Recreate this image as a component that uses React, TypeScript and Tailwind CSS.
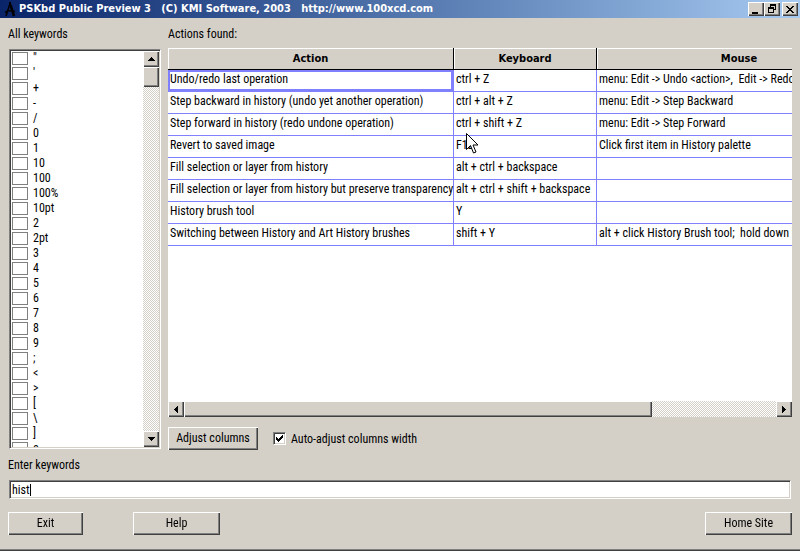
import { useState } from 'react'

interface Shortcut {
  action: string
  keyboard: string
  mouse: string
}

const KEYWORDS = [
  '"', "'", '+', '-', '/', '0', '1', '10', '100', '100%', '10pt', '2', '2pt', '3',
  '4', '5', '6', '7', '8', '9', ';', '<', '>', '[', '\\', ']', 'a',
]

const SHORTCUTS: Shortcut[] = [
  { action: 'Undo/redo last operation', keyboard: 'ctrl + Z', mouse: 'menu: Edit -> Undo <action>,  Edit -> Redo <action>' },
  { action: 'Step backward in history (undo yet another operation)', keyboard: 'ctrl + alt + Z', mouse: 'menu: Edit -> Step Backward' },
  { action: 'Step forward in history (redo undone operation)', keyboard: 'ctrl + shift + Z', mouse: 'menu: Edit -> Step Forward' },
  { action: 'Revert to saved image', keyboard: 'F12', mouse: 'Click first item in History palette' },
  { action: 'Fill selection or layer from history', keyboard: 'alt + ctrl + backspace', mouse: '' },
  { action: 'Fill selection or layer from history but preserve transparency', keyboard: 'alt + ctrl + shift + backspace', mouse: '' },
  { action: 'History brush tool', keyboard: 'Y', mouse: '' },
  { action: 'Switching between History and Art History brushes', keyboard: 'shift + Y', mouse: 'alt + click History Brush tool;  hold down left button' },
]

const RAISED = 'bg-[#d4d0c8] shadow-[inset_1px_1px_#fff,inset_-1px_-1px_#404040,inset_-2px_-2px_#808080]'
const SUNKEN = 'bg-white border border-t-[#808080] border-l-[#808080] border-r-white border-b-white shadow-[inset_1px_1px_#404040,inset_-1px_-1px_#d4d0c8]'
const TRACK = 'bg-[repeating-conic-gradient(#fff_0_25%,#d4d0c8_0_50%)] bg-[length:2px_2px]'

const ARROWS = {
  up: 'M0 4h7L3.5 0z',
  down: 'M0 0h7L3.5 4z',
  left: 'M4 0v7L0 3.5z',
  right: 'M0 0v7l4-3.5z',
}

function ScrollButton({ dir }: { dir: keyof typeof ARROWS }) {
  const vertical = dir === 'up' || dir === 'down'
  return (
    <button aria-label={`Scroll ${dir}`} className={`flex size-4 shrink-0 items-center justify-center ${RAISED}`}>
      <svg width={vertical ? 7 : 4} height={vertical ? 4 : 7} shapeRendering="crispEdges">
        <path d={ARROWS[dir]} />
      </svg>
    </button>
  )
}

function PushButton({ label, className }: { label: string; className: string }) {
  return <button className={`h-[23px] pb-px ${RAISED} ${className}`}>{label}</button>
}

function TitleBar() {
  const button = `flex h-[14px] w-4 items-center justify-center ${RAISED}`
  return (
    <header className="flex h-[18px] items-center bg-linear-to-r from-[#0a246a] to-[#a6caf0] pr-[2px] pl-1">
      <svg width="13" height="16" viewBox="0 0 13 16" className="mr-[2px]" fill="none" stroke="#000">
        <path d="M6 1v4" strokeWidth="2" />
        <path d="M5.5 4L2 15" strokeWidth="1.5" />
        <path d="M6.5 4L10 15" strokeWidth="2.5" />
        <path d="M1 11.5c2-2 6-2 10-1" strokeWidth="1.5" />
      </svg>
      <h1 className="flex-1 truncate font-['DejaVu_Sans_Condensed','DejaVu_Sans',sans-serif] text-[11px] font-bold whitespace-pre text-white">
        {'PSKbd Public Preview 3   (C) KMI Software, 2003   http://www.100xcd.com'}
      </h1>
      <button aria-label="Minimize" className={button}>
        <svg width="10" height="9"><path d="M1 7h6v2H1z" /></svg>
      </button>
      <button aria-label="Restore" className={button}>
        <svg width="10" height="10" shapeRendering="crispEdges">
          <path d="M3 0h6v6H7V5h1V2H4v1H3zM1 3h6v6H1zM2 5v3h4V5z" fillRule="evenodd" />
        </svg>
      </button>
      <button aria-label="Close" className={`ml-[2px] ${button}`}>
        <svg width="8" height="7" shapeRendering="crispEdges">
          <path d="M0 0h2v1h1v1h2V1h1V0h2v1H7v1H6v1H5v1h1v1h1v1h1v1H6V6H5V5H3v1H2v1H0V6h1V5h1V4h1V3H2V2H1V1H0z" />
        </svg>
      </button>
    </header>
  )
}

function KeywordList() {
  return (
    <section className="flex w-[153px] shrink-0 flex-col">
      <h2 className="h-[23px] leading-4">All keywords</h2>
      <div className={`ml-px flex h-[400px] overflow-hidden p-px ${SUNKEN}`}>
        <ul className="flex-1 overflow-hidden">
          {KEYWORDS.map(word => (
            <li key={word} className="h-[15px]">
              <label className="flex h-[15px] items-center gap-[5px] pl-px">
                <input type="checkbox" className="h-[13px] w-4 appearance-none border border-[#808080] bg-white" />
                <span className="leading-[15px]">{word}</span>
              </label>
            </li>
          ))}
        </ul>
        <div className={`flex w-4 flex-col ${TRACK}`}>
          <ScrollButton dir="up" />
          <div className={`h-5 ${RAISED}`} />
          <div className="flex-1" />
          <ScrollButton dir="down" />
        </div>
      </div>
    </section>
  )
}

function Pointer() {
  return (
    <svg width="13" height="21" viewBox="0 0 13 21" className="pointer-events-none absolute -top-[5px] left-[10px]">
      <path d="M.5.5v16l4-4 3 7.5 2.5-1-3-7h5z" fill="#fff" stroke="#000" />
    </svg>
  )
}

function ActionsTable() {
  const head = 'border-r border-b border-black p-0 shadow-[inset_1px_1px_#fff] last:border-r-0'
  const cell = 'border-r border-b border-[#8080ff] px-[2px] pt-0 pb-[3px] last:border-r-0'
  return (
    <div className="flex h-[369px] flex-col bg-white">
      <div className="flex-1 overflow-hidden">
        <table className="w-[713px] table-fixed border-separate border-spacing-0 whitespace-pre">
          <colgroup>
            <col className="w-[286px]" />
            <col className="w-[143px]" />
            <col />
          </colgroup>
          <thead>
            <tr className="h-[22px] bg-[#d4d0c8] font-['DejaVu_Sans_Condensed','DejaVu_Sans',sans-serif] text-[11px]">
              <th className={head}>Action</th>
              <th className={head}>Keyboard</th>
              <th className={head}>Mouse</th>
            </tr>
          </thead>
          <tbody>
            {SHORTCUTS.map((row, i) => (
              <tr key={row.action} className="h-[22px]">
                <td className={`${cell} ${i === 0 ? 'shadow-[inset_0_0_0_2px_#8080ff]' : ''}`}>{row.action}</td>
                <td className={cell}>
                  <span className="relative">
                    {row.keyboard}
                    {i === 3 && <Pointer />}
                  </span>
                </td>
                <td className={cell}>{row.mouse}</td>
              </tr>
            ))}
          </tbody>
        </table>
      </div>
      <div className={`flex h-4 ${TRACK}`}>
        <ScrollButton dir="left" />
        <div className={`w-3/4 ${RAISED}`} />
        <div className="flex-1" />
        <ScrollButton dir="right" />
      </div>
    </div>
  )
}

export default function App() {
  const [query, setQuery] = useState('hist')
  const [autoAdjust, setAutoAdjust] = useState(true)

  return (
    <div className="min-h-screen bg-[#d4d0c8] font-['Roboto_Condensed','Liberation_Sans_Narrow','Liberation_Sans',sans-serif] text-[12px] leading-4 text-black shadow-[inset_0_-1px_#404040,inset_0_-2px_#808080]">
      <TitleBar />
      <main className="px-2 pt-2 pb-4">
        <div className="flex gap-[7px]">
          <KeywordList />
          <section className="min-w-0 flex-1">
            <h2 className="h-[22px] leading-4">Actions found:</h2>
            <ActionsTable />
            <div className="mt-[10px] flex items-center">
              <PushButton label="Adjust columns" className="w-[90px]" />
              <label className="ml-[15px] flex items-center gap-[5px]">
                <span className="relative flex">
                  <input
                    type="checkbox"
                    checked={autoAdjust}
                    onChange={e => setAutoAdjust(e.target.checked)}
                    className={`size-[13px] appearance-none ${SUNKEN}`}
                  />
                  {autoAdjust && (
                    <svg width="7" height="7" className="pointer-events-none absolute top-[3px] left-[3px]" shapeRendering="crispEdges">
                      <path d="M0 2h1v1h1v1h1V3h1V2h1V1h1V0h1v3H6v1H5v1H4v1H3v1H2V6H1V5H0z" />
                    </svg>
                  )}
                </span>
                Auto-adjust columns width
              </label>
            </div>
          </section>
        </div>
        <label htmlFor="keywords" className="mt-[7px] block h-[23px]">Enter keywords</label>
        <div className={`mx-px flex h-[19px] items-center pl-[2px] ${SUNKEN}`}>
          <input
            id="keywords"
            value={query}
            autoFocus
            onChange={e => setQuery(e.target.value)}
            className="field-sizing-content max-w-full bg-transparent caret-transparent outline-none"
          />
          <div className="h-3 w-px bg-black" />
        </div>
        <div className="mt-[13px] flex">
          <PushButton label="Exit" className="w-[75px]" />
          <PushButton label="Help" className="ml-[50px] w-[87px]" />
          <PushButton label="Home Site" className="ml-auto w-[87px]" />
        </div>
      </main>
    </div>
  )
}
